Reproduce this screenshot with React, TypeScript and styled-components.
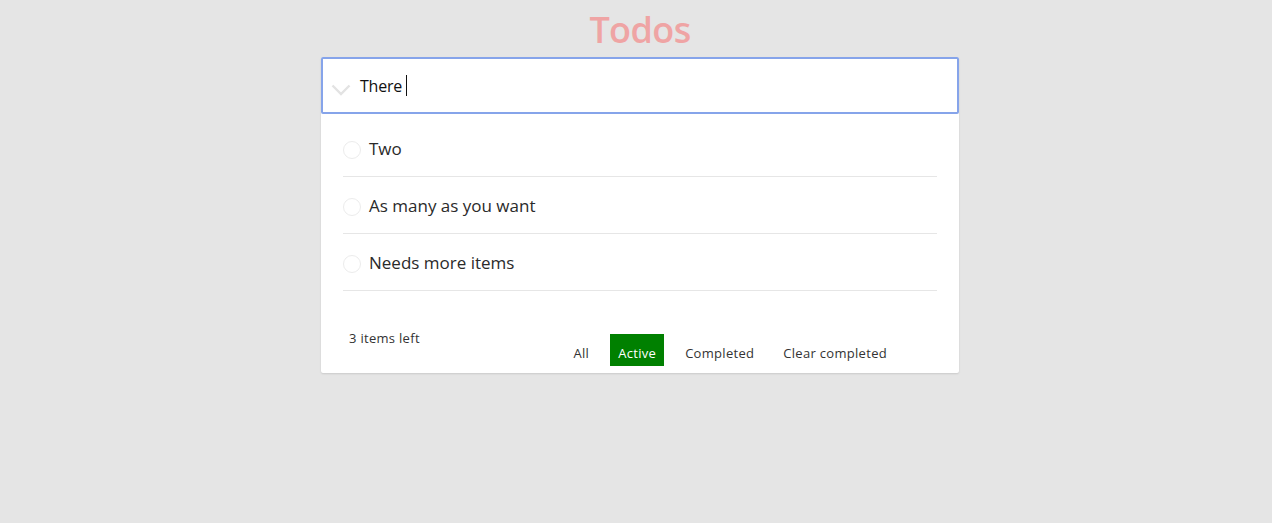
import React from 'react'
import styled, { createGlobalStyle } from 'styled-components'

const GlobalStyle = createGlobalStyle`
  html, body {
    margin: 0;
    padding: 0;
    background: #e5e5e5;
  }
  body {
    font-family: 'Open Sans', 'Noto Sans', 'Liberation Sans', sans-serif;
    color: #222;
  }
`

interface Todo {
  id: number
  title: string
}

const todos: Todo[] = [
  { id: 1, title: 'Two' },
  { id: 2, title: 'As many as you want' },
  { id: 3, title: 'Needs more items' }
]

const filters = ['All', 'Active', 'Completed']

const App = () => {
  const active = 'Active'

  return (
    <Page>
      <GlobalStyle />
      <Title>Todos</Title>
      <Card>
        <InputRow>
          <ToggleAll>
            <svg width="20" height="12" viewBox="0 0 20 12">
              <polyline points="1.5,1.5 10,10 18.5,1.5" fill="none" stroke="#e3e3e3" strokeWidth="2.4" />
            </svg>
          </ToggleAll>
          <InputText>
            There
            <Caret />
          </InputText>
        </InputRow>

        <List>
          {todos.map((todo) => (
            <Item key={todo.id}>
              <Check />
              <ItemLabel>{todo.title}</ItemLabel>
            </Item>
          ))}
        </List>

        <Footer>
          <Count>3 items left</Count>
          <Filters>
            {filters.map((f) => (
              <FilterButton key={f} $active={f === active}>
                {f}
              </FilterButton>
            ))}
            <FilterButton>Clear completed</FilterButton>
          </Filters>
        </Footer>
      </Card>
    </Page>
  )
}

const Page = styled.div`
  width: 1272px;
  height: 523px;
  box-sizing: border-box;
  padding-left: 8px;
  display: flex;
  flex-direction: column;
  align-items: center;
`

const Title = styled.h1`
  margin: 6px 0 0;
  height: 51px;
  font-size: 36px;
  line-height: 48px;
  font-weight: 600;
  color: #efa4a4;
  letter-spacing: -0.6px;
`

const Card = styled.div`
  width: 638px;
  background: #fff;
  border-radius: 2px;
  box-shadow: 0 1px 2px rgba(0, 0, 0, 0.12);
`

const InputRow = styled.div`
  height: 57px;
  box-sizing: border-box;
  border: 2px solid #86a4ea;
  border-radius: 2px;
  display: flex;
  align-items: center;
  padding-left: 8px;
`

const ToggleAll = styled.div`
  width: 22px;
  display: flex;
  align-items: center;
  margin-top: 8px;
`

const InputText = styled.div`
  margin-left: 7px;
  font-size: 16px;
  color: #111;
  display: flex;
  align-items: center;
  letter-spacing: -0.2px;
`

const Caret = styled.span`
  display: inline-block;
  width: 1px;
  height: 21px;
  background: #111;
  margin-left: 4px;
`

const List = styled.ul`
  list-style: none;
  margin: 0;
  padding: 6px 22px 0;
`

const Item = styled.li`
  height: 56px;
  border-bottom: 1px solid #e6e6e6;
  display: flex;
  align-items: center;
  gap: 8px;
`

const Check = styled.span`
  width: 16px;
  height: 16px;
  border: 1px solid #ececec;
  border-radius: 50%;
  margin-top: 3px;
`

const ItemLabel = styled.span`
  font-size: 17px;
  color: #2a2a2a;
  letter-spacing: 0;
`

const Footer = styled.div`
  display: flex;
  align-items: flex-start;
  padding: 38px 0 7px 28px;
`

const Count = styled.span`
  font-size: 13px;
  line-height: 18px;
  color: #333;
  letter-spacing: 0.3px;
`

const Filters = styled.div`
  display: flex;
  gap: 13px;
  margin: 5px 64px 0 auto;
`

const FilterButton = styled.button<{ $active?: boolean }>`
  height: 32px;
  padding: 6px 8px 0;
  border: none;
  border-radius: 0;
  font-family: inherit;
  font-size: 13px;
  letter-spacing: 0.3px;
  cursor: pointer;
  background: ${(p) => (p.$active ? '#008000' : 'transparent')};
  color: ${(p) => (p.$active ? '#fff' : '#333')};
`

export default App
